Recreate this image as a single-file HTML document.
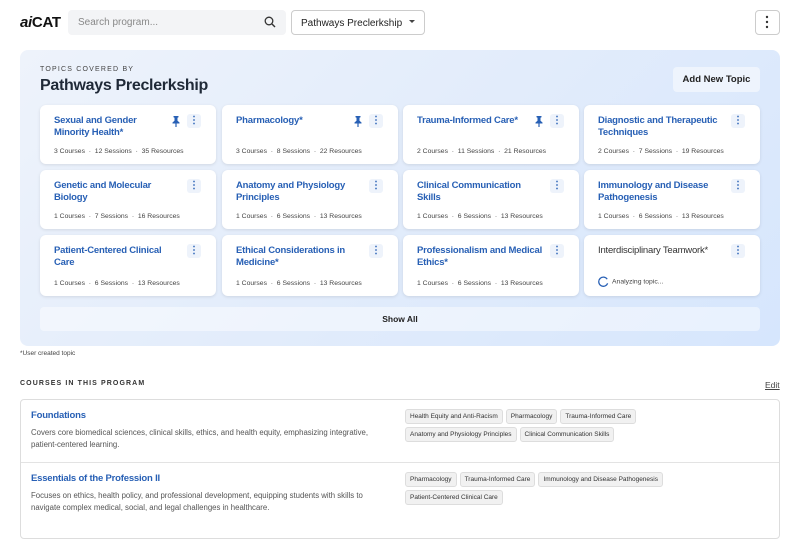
<!DOCTYPE html>
<html><head><meta charset="utf-8"><style>
*{box-sizing:border-box;margin:0;padding:0}
body{width:800px;height:520px;overflow:hidden;background:#fff;font-family:"Liberation Sans",sans-serif;color:#222;position:relative}
.abs{position:absolute}
.logo{left:20px;top:14px;font-size:15px;font-weight:bold;color:#111;letter-spacing:-0.3px}
.logo i{font-style:italic}
.search{left:68px;top:10px;width:218px;height:25px;background:#f3f4f6;border-radius:4px;font-size:10px;color:#888;padding:7px 10px}
.dd{left:291px;top:10px;width:134px;height:25px;border:1px solid #ccc;border-radius:4px;font-size:10px;padding:7px 9px;color:#222}
.mb{left:755px;top:10px;width:25px;height:25px;border:1px solid #ccc;border-radius:4px}
.panel{left:20px;top:50px;width:760px;height:296px;border-radius:8px;background:linear-gradient(135deg,#eef3fb 0%,#e2ecfb 50%,#d6e6fd 100%)}
.cap{left:40px;top:66px;font-size:7px;letter-spacing:1.2px;color:#444}
.ttl{left:40px;top:77px;font-size:16px;font-weight:bold;color:#1f2937;letter-spacing:-0.3px}
.add{left:673px;top:67px;width:87px;height:25px;background:#eef4fd;border-radius:4px;font-size:9.5px;font-weight:bold;text-align:center;line-height:25px;color:#222}
.card{position:absolute;width:176px;background:#fff;border-radius:6px;box-shadow:0 1px 3px rgba(0,0,0,.1);padding:10px 14px}
.card h4{font-size:9.5px;color:#2860b5;line-height:12px;white-space:nowrap;font-weight:bold;letter-spacing:-0.2px}
.card h4.n{color:#333;font-weight:normal}
.card .m{position:absolute;left:14px;bottom:9px;font-size:6.8px;color:#444;white-space:nowrap}
.ic{position:absolute;top:9px;width:14px;height:14px;border-radius:3px;background:#eef3fb;color:#2860b5;font-size:10px;text-align:center;line-height:14px;font-weight:bold}
.pin{position:absolute;top:10px;width:12px;height:12px}
.show{left:40px;top:307px;width:720px;height:24px;background:rgba(255,255,255,.45);border-radius:4px;font-size:8.5px;font-weight:bold;text-align:center;line-height:24px}
.note{left:20px;top:350px;font-size:6.5px;color:#444}
.ch{left:20px;top:380px;font-size:7px;letter-spacing:1.1px;font-weight:bold;color:#333}
.edit{left:765px;top:380px;font-size:8.5px;text-decoration:underline;color:#444}
.tbl{left:20px;top:399px;width:760px;height:140px;border:1px solid #ddd;border-radius:4px}
.row{position:absolute;left:0;width:758px;padding:10px}
.row h5{font-size:9.5px;color:#2860b5;font-weight:bold;margin-bottom:6px;letter-spacing:-0.2px}
.row p{font-size:7.8px;color:#555;line-height:12px;white-space:nowrap}
.tags{position:absolute;left:384px;top:9px;width:300px;display:flex;flex-wrap:wrap;gap:3px 3px}
.tag{font-size:6.5px;background:#f1f1f1;border:1px solid #ddd;border-radius:3px;padding:3px 4px;color:#333;line-height:7px}
</style></head><body>
<div class="abs logo"><i>ai</i>CAT</div>
<div class="abs search">Search program...</div>
<svg class="abs" style="left:264px;top:16px" width="12" height="12" viewBox="0 0 12 12"><circle cx="5" cy="5" r="3.8" fill="none" stroke="#333" stroke-width="1.3"/><path d="M8 8L11 11" stroke="#333" stroke-width="1.4"/></svg>
<div class="abs dd">Pathways Preclerkship</div>
<svg class="abs" style="left:409px;top:20px" width="7" height="5"><path d="M0 0h6L3 3z" fill="#444"/></svg>
<div class="abs mb"></div>
<svg class="abs" style="left:765px;top:15px" width="4" height="14"><circle cx="2" cy="2" r="1.2" fill="#333"/><circle cx="2" cy="7" r="1.2" fill="#333"/><circle cx="2" cy="12" r="1.2" fill="#333"/></svg>
<div class="abs panel"></div>
<div class="abs cap">TOPICS COVERED BY</div>
<div class="abs ttl">Pathways Preclerkship</div>
<div class="abs add">Add New Topic</div>

<svg width="0" height="0" style="position:absolute"><symbol id="p" viewBox="0 0 12 12"><path d="M3.5 1h5v1.2l-1 .6v3l2 1.7v1H6.6V12h-1.2V8.5H2.5v-1l2-1.7v-3l-1-.6z" fill="#2860b5"/></symbol></svg>

<div class="card" style="left:40px;top:105px;height:59px"><h4>Sexual and Gender<br>Minority Health*</h4><svg class="pin" style="left:130px"><use href="#p"/></svg><span class="ic" style="left:147px">⋮</span><div class="m">3 Courses &nbsp;·&nbsp; 12 Sessions &nbsp;·&nbsp; 35 Resources</div></div>
<div class="card" style="left:222px;top:105px;height:59px"><h4>Pharmacology*</h4><svg class="pin" style="left:130px"><use href="#p"/></svg><span class="ic" style="left:147px">⋮</span><div class="m">3 Courses &nbsp;·&nbsp; 8 Sessions &nbsp;·&nbsp; 22 Resources</div></div>
<div class="card" style="left:403px;top:105px;height:59px"><h4>Trauma-Informed Care*</h4><svg class="pin" style="left:130px"><use href="#p"/></svg><span class="ic" style="left:147px">⋮</span><div class="m">2 Courses &nbsp;·&nbsp; 11 Sessions &nbsp;·&nbsp; 21 Resources</div></div>
<div class="card" style="left:584px;top:105px;height:59px"><h4>Diagnostic and Therapeutic<br>Techniques</h4><span class="ic" style="left:147px">⋮</span><div class="m">2 Courses &nbsp;·&nbsp; 7 Sessions &nbsp;·&nbsp; 19 Resources</div></div>

<div class="card" style="left:40px;top:170px;height:59px"><h4>Genetic and Molecular<br>Biology</h4><span class="ic" style="left:147px">⋮</span><div class="m">1 Courses &nbsp;·&nbsp; 7 Sessions &nbsp;·&nbsp; 16 Resources</div></div>
<div class="card" style="left:222px;top:170px;height:59px"><h4>Anatomy and Physiology<br>Principles</h4><span class="ic" style="left:147px">⋮</span><div class="m">1 Courses &nbsp;·&nbsp; 6 Sessions &nbsp;·&nbsp; 13 Resources</div></div>
<div class="card" style="left:403px;top:170px;height:59px"><h4>Clinical Communication<br>Skills</h4><span class="ic" style="left:147px">⋮</span><div class="m">1 Courses &nbsp;·&nbsp; 6 Sessions &nbsp;·&nbsp; 13 Resources</div></div>
<div class="card" style="left:584px;top:170px;height:59px"><h4>Immunology and Disease<br>Pathogenesis</h4><span class="ic" style="left:147px">⋮</span><div class="m">1 Courses &nbsp;·&nbsp; 6 Sessions &nbsp;·&nbsp; 13 Resources</div></div>

<div class="card" style="left:40px;top:235px;height:61px"><h4>Patient-Centered Clinical<br>Care</h4><span class="ic" style="left:147px">⋮</span><div class="m">1 Courses &nbsp;·&nbsp; 6 Sessions &nbsp;·&nbsp; 13 Resources</div></div>
<div class="card" style="left:222px;top:235px;height:61px"><h4>Ethical Considerations in<br>Medicine*</h4><span class="ic" style="left:147px">⋮</span><div class="m">1 Courses &nbsp;·&nbsp; 6 Sessions &nbsp;·&nbsp; 13 Resources</div></div>
<div class="card" style="left:403px;top:235px;height:61px"><h4>Professionalism and Medical<br>Ethics*</h4><span class="ic" style="left:147px">⋮</span><div class="m">1 Courses &nbsp;·&nbsp; 6 Sessions &nbsp;·&nbsp; 13 Resources</div></div>
<div class="card" style="left:584px;top:235px;height:61px"><h4 class="n">Interdisciplinary Teamwork*</h4><span class="ic" style="left:147px">⋮</span><div class="m" style="bottom:9px"><svg width="11" height="11" style="vertical-align:middle;margin-right:3px" viewBox="0 0 12 12"><path d="M10 3.5A5 5 0 1 0 10.5 8" fill="none" stroke="#2860b5" stroke-width="1.4"/></svg>Analyzing topic...</div></div>

<div class="abs show">Show All</div>
<div class="abs note">*User created topic</div>
<div class="abs ch">COURSES IN THIS PROGRAM</div>
<div class="abs edit">Edit</div>
<div class="abs tbl">
<div class="row" style="top:0;height:63px;border-bottom:1px solid #e3e3e3"><h5>Foundations</h5><p>Covers core biomedical sciences, clinical skills, ethics, and health equity, emphasizing integrative,<br>patient-centered learning.</p>
<div class="tags"><span class="tag">Health Equity and Anti-Racism</span><span class="tag">Pharmacology</span><span class="tag">Trauma-Informed Care</span><span class="tag">Anatomy and Physiology Principles</span><span class="tag">Clinical Communication Skills</span></div></div>
<div class="row" style="top:63px"><h5>Essentials of the Profession II</h5><p>Focuses on ethics, health policy, and professional development, equipping students with skills to<br>navigate complex medical, social, and legal challenges in healthcare.</p>
<div class="tags"><span class="tag">Pharmacology</span><span class="tag">Trauma-Informed Care</span><span class="tag">Immunology and Disease Pathogenesis</span><span class="tag" style="margin-right:100px">Patient-Centered Clinical Care</span></div></div>
</div>
</body></html>
